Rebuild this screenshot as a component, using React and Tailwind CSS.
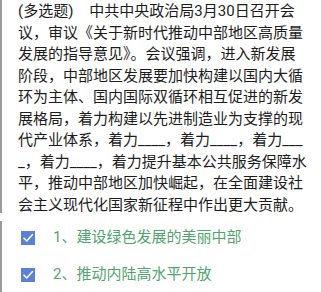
export default function App() {
  const options = ["1、建设绿色发展的美丽中部", "2、推动内陆高水平开放"];

  return (
    <div
      className="w-[321px] h-[292px] bg-white overflow-hidden relative"
      style={{ fontFamily: "Roboto, 'Noto Sans CJK SC', sans-serif" }}
    >
      <div className="absolute left-0 top-0 w-[2px] h-[213px] bg-[#9a9a9a]" />
      <div className="absolute left-0 top-[221px] w-[2px] h-[71px] bg-[#9a9a9a]" />
      <p className="ml-[18px] w-[290px] pt-[1px] text-[15px] leading-[21.5px] text-[#1c1c1c] break-all">
        <span>(多选题)</span>
        <span className="inline-block w-[16px]" />
        中共中央政治局3月30日召开会议，审议《关于新时代推动中部地区高质量发展的指导意见》。会议强调，进入新发展阶段，中部地区发展要加快构建以国内大循环为主体、国内国际双循环相互促进的新发展格局，着力构建以先进制造业为支撑的现代产业体系，着力____，着力____，着力____，着力____，着力提升基本公共服务保障水平，推动中部地区加快崛起，在全面建设社会主义现代化国家新征程中作出更大贡献。
      </p>
      <div className="mt-[3px] flex flex-col">
        {options.map((opt) => (
          <div key={opt} className="flex items-center h-[37px] pl-[21px]">
            <span className="w-[14px] h-[14px] bg-[#5b80d8] flex items-center justify-center">
              <svg width="12" height="12" viewBox="0 0 12 12" fill="none">
                <path
                  d="M2 6.2 L4.8 9 L10.5 2.5"
                  stroke="white"
                  strokeWidth="1.6"
                  strokeLinecap="round"
                  strokeLinejoin="round"
                />
              </svg>
            </span>
            <span className="ml-[18px] text-[15px] text-[#4fa56b]">{opt}</span>
          </div>
        ))}
      </div>
    </div>
  );
}
